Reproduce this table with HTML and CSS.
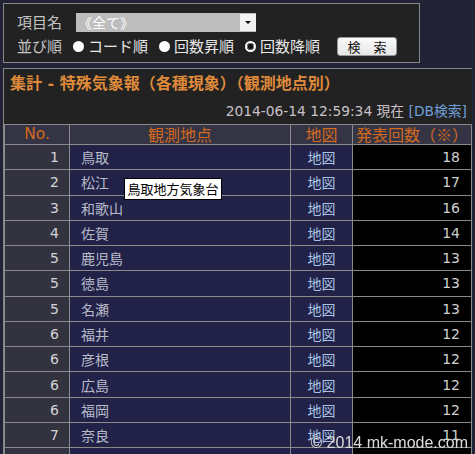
FILE: index.html
```html
<!DOCTYPE html>
<html lang="ja">
<head>
<meta charset="utf-8">
<title>集計 - 特殊気象報（各種現象）（観測地点別）</title>
<link rel="stylesheet" href="styles.css">
</head>
<body>
<form class="search">
  <div class="row">
    <label class="lbl" for="item">項目名</label>
    <div class="select-wrap">
      <select id="item" class="select"><option>《全て》</option></select>
      <span class="arrow"></span>
    </div>
  </div>
  <div class="row">
    <span class="lbl">並び順</span>
    <label class="opt"><input type="radio" name="sort" class="radio">コード順</label>
    <label class="opt"><input type="radio" name="sort" class="radio">回数昇順</label>
    <label class="opt"><input type="radio" name="sort" class="radio" checked>回数降順</label>
    <button type="button" class="btn">検　索</button>
  </div>
</form>

<section class="panel">
  <h1 class="title">集計 - 特殊気象報（各種現象）（観測地点別）</h1>
  <p class="stamp">2014-06-14 12:59:34 現在 <a class="link" href="#">[DB検索]</a></p>
  <table class="stats">
    <colgroup>
      <col class="c-no"><col class="c-name"><col class="c-map"><col class="c-cnt">
    </colgroup>
    <thead>
      <tr><th class="h-no">No.</th><th>観測地点</th><th>地図</th><th>発表回数（※）</th></tr>
    </thead>
    <tbody>
      <tr><td class="no">1</td><td class="name">鳥取</td><td class="map">地図</td><td class="cnt">18</td></tr>
      <tr><td class="no">2</td><td class="name">松江</td><td class="map">地図</td><td class="cnt">17</td></tr>
      <tr><td class="no">3</td><td class="name">和歌山</td><td class="map">地図</td><td class="cnt">16</td></tr>
      <tr><td class="no">4</td><td class="name">佐賀</td><td class="map">地図</td><td class="cnt">14</td></tr>
      <tr><td class="no">5</td><td class="name">鹿児島</td><td class="map">地図</td><td class="cnt">13</td></tr>
      <tr><td class="no">5</td><td class="name">徳島</td><td class="map">地図</td><td class="cnt">13</td></tr>
      <tr><td class="no">5</td><td class="name">名瀬</td><td class="map">地図</td><td class="cnt">13</td></tr>
      <tr><td class="no">6</td><td class="name">福井</td><td class="map">地図</td><td class="cnt">12</td></tr>
      <tr><td class="no">6</td><td class="name">彦根</td><td class="map">地図</td><td class="cnt">12</td></tr>
      <tr><td class="no">6</td><td class="name">広島</td><td class="map">地図</td><td class="cnt">12</td></tr>
      <tr><td class="no">6</td><td class="name">福岡</td><td class="map">地図</td><td class="cnt">12</td></tr>
      <tr><td class="no">7</td><td class="name">奈良</td><td class="map">地図</td><td class="cnt">11</td></tr>
      <tr><td class="no">8</td><td class="name">秋田</td><td class="map">地図</td><td class="cnt">10</td></tr>
    </tbody>
  </table>
</section>

<div class="tooltip">鳥取地方気象台</div>
<footer class="copy">© 2014 mk-mode.com</footer>
</body>
</html>
```

FILE: styles.css
```css
html, body { overflow: hidden; }
body {
  margin: 3px;
  background: #232338;
  color: #cccccc;
  font-family: "DejaVu Sans", "Noto Sans CJK JP", sans-serif;
  font-size: 14px;
}

/* search form */
.search {
  width: 415px;
  height: 58px;
  border: 1px solid #888888;
  background: #222222;
  padding: 0;
  display: flex;
  flex-direction: column;
  gap: 4px;
}
.row {
  display: flex;
  align-items: center;
  height: 20px;
  padding-left: 13px;
}
.row:first-child { margin-top: 8px; }
.lbl {
  font-family: "Noto Sans CJK JP", sans-serif;
  font-size: 15px;
  line-height: 20px;
  color: #c4c4c4;
  width: 56px;
}
.select-wrap {
  display: flex;
  margin-left: 3px;
  width: 180px;
  height: 19px;
  background: #bdbdbd;
}
.select {
  appearance: none;
  -webkit-appearance: none;
  border: 0;
  margin: 0;
  padding: 0 0 0 2px;
  flex: 1;
  height: 19px;
  background: transparent;
  color: #ffffff;
  font-family: "Noto Sans CJK JP", sans-serif;
  font-size: 14px;
  line-height: 19px;
}
.arrow {
  width: 16px;
  height: 17px;
  margin: 1px 0;
  background: #f2f2f2;
  display: flex;
  align-items: center;
  justify-content: center;
}
.arrow::before {
  content: "";
  border-left: 3px solid transparent;
  border-right: 3px solid transparent;
  border-top: 3px solid #000;
}
.opt {
  display: flex;
  align-items: center;
  font-family: "Noto Sans CJK JP", sans-serif;
  font-size: 15px;
  line-height: 20px;
  color: #e8e8e8;
  margin-right: 11px;
}
.radio {
  appearance: none;
  -webkit-appearance: none;
  width: 11px;
  height: 11px;
  margin: 0 4px 0 0;
  border-radius: 50%;
  background: #ffffff;
  border: 0;
}
.radio:checked {
  background: radial-gradient(circle, #111 0 2.5px, #777 3px 3.6px, #fff 4px);
}
.btn {
  margin-left: 6px;
  width: 60px;
  height: 19px;
  padding: 0;
  border: 1px solid #999;
  border-radius: 3px;
  background: linear-gradient(#fafafa, #e6e6e6);
  color: #111;
  font-family: "Noto Sans CJK JP", sans-serif;
  font-size: 13px;
  line-height: 17px;
}

/* result panel */
.panel {
  margin-top: 5px;
  width: 468px;
  border: 1px solid #888888;
  background: #222222;
}
.title {
  margin: 0;
  padding: 4px 6px 0;
  font-family: "DejaVu Sans", "Noto Sans CJK JP", sans-serif;
  font-size: 16px;
  line-height: 21px;
  font-weight: bold;
  color: #df8a3a;
}
.stamp {
  margin: 8px 0 0;
  padding: 0 5px 4px 0;
  text-align: right;
  line-height: 18px;
  font-size: 13.8px;
  color: #c9c0c8;
}
.link { color: #6f9fd8; text-decoration: none; }

.stats {
  width: 100%;
  border-collapse: collapse;
  table-layout: fixed;
}
.c-no { width: 65px; }
.c-name { width: 221px; }
.c-map { width: 62px; }
.stats th, .stats td {
  border: 1px solid #8a8a8a;
  padding: 0;
}
.stats th {
  height: 19px;
  background: #343444;
  color: #d2691e;
  font-family: "Noto Sans CJK JP", sans-serif;
  font-weight: normal;
  font-size: 16px;
  line-height: 19px;
  text-align: center;
}
.stats .h-no { font-family: "DejaVu Sans", sans-serif; font-size: 15.5px; }
.stats td {
  height: 24.27px;
  line-height: 18px;
  font-size: 14px;
}
.stats .no {
  background: #333340;
  text-align: right;
  padding-right: 10px;
  color: #d4d4d8;
}
.stats .name {
  background: #222248;
  color: #b8bcc8;
  padding-left: 11px;
  font-family: "Noto Sans CJK JP", sans-serif;
}
.stats .map {
  background: #222248;
  color: #a9c4e4;
  text-align: center;
  font-family: "Noto Sans CJK JP", sans-serif;
}
.stats .cnt {
  background: #000000;
  color: #d0d0d0;
  text-align: right;
  padding-right: 11px;
}

/* overlays */
.tooltip {
  position: absolute;
  left: 124px;
  top: 178px;
  width: 96px;
  height: 20px;
  border: 1px solid #000;
  background: #ffffff;
  color: #000;
  font-family: "Noto Sans CJK JP", sans-serif;
  font-size: 13px;
  line-height: 20px;
  text-align: center;
}
.copy {
  position: fixed;
  right: 7px;
  bottom: 1px;
  font-family: "Liberation Sans", sans-serif;
  font-size: 16px;
  line-height: 20px;
  color: #dddddd;
}
```
